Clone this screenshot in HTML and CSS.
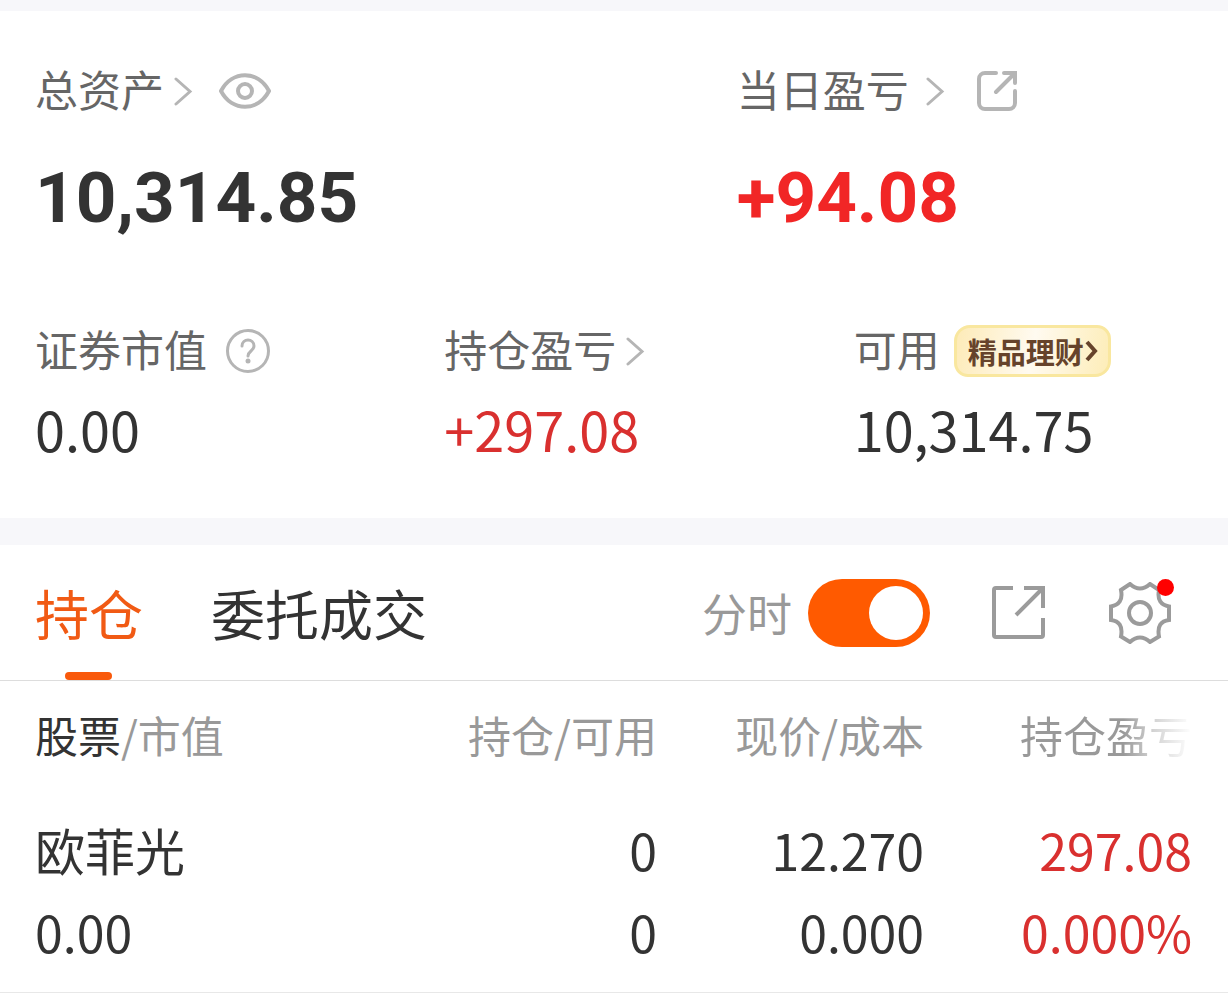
FILE: index.html
```
<!DOCTYPE html>
<html lang="zh-CN">
<head>
    <meta charset="UTF-8">
    <meta name="viewport" content="width=device-width, initial-scale=1.0">
    <title>持仓</title>
    <link rel="stylesheet" href="styles.css">
</head>
<body>
    <section class="summary">
        <div class="summary-main">
            <div class="item">
                <div class="label">
                    <a href="#assets"><span>总资产</span><svg class="arrow" width="19" height="30" viewBox="0 0 19 30"><path d="M2 3l14 12.500L2 28"/></svg></a>
                    <button class="icon-btn eye" type="button" aria-label="隐藏金额">
                        <svg width="52" height="36" viewBox="0 0 52 36"><path d="M2 18C13-3 39-3 50 18C39 39 13 39 2 18Z"/><circle cx="26" cy="18" r="7"/></svg>
                    </button>
                </div>
                <div class="total">10,314.85</div>
            </div>
            <div class="item">
                <div class="label">
                    <a href="#today"><span>当日盈亏</span><svg class="arrow wide" width="19" height="30" viewBox="0 0 19 30"><path d="M2 3l14 12.500L2 28"/></svg></a>
                    <button class="icon-btn share" type="button" aria-label="分享">
                        <svg width="40" height="40" viewBox="0 0 40 40"><path d="M19 2H8a6 6 0 0 0-6 6v24a6 6 0 0 0 6 6h24a6 6 0 0 0 6-6V20M27 2h11v10M38 2L19 21"/></svg>
                    </button>
                </div>
                <div class="total up">+94.08</div>
            </div>
        </div>
        <div class="summary-sub">
            <div class="item">
                <div class="label">
                    <span>证券市值</span>
                    <button class="icon-btn help" type="button" aria-label="说明">
                        <svg width="46" height="46" viewBox="0 0 46 46"><circle cx="23" cy="23" r="20.500"/><path d="M17 18c0-8 12-8 12 0c0 5-6 5-6 10"/><circle class="dot" cx="23" cy="33" r="2.500"/></svg>
                    </button>
                </div>
                <div class="value">0.00</div>
            </div>
            <div class="item">
                <div class="label">
                    <a href="#profit"><span>持仓盈亏</span><svg class="arrow" width="19" height="30" viewBox="0 0 19 30"><path d="M2 3l14 12.500L2 28"/></svg></a>
                </div>
                <div class="value up">+297.08</div>
            </div>
            <div class="item">
                <div class="label">
                    <span>可用</span>
                    <button class="badge" type="button">精品理财<svg width="14" height="22" viewBox="0 0 14 22"><path d="M3 2l8 9l-8 9"/></svg></button>
                </div>
                <div class="value">10,314.75</div>
            </div>
        </div>
    </section>

    <section class="positions">
        <div class="toolbar">
            <nav class="tabs">
                <a class="tab active" href="#positions">持仓</a>
                <a class="tab" href="#orders">委托成交</a>
            </nav>
            <div class="tools">
                <label for="chart">分时</label>
                <input type="checkbox" id="chart" class="switch" checked>
                <button class="icon-btn export" type="button" aria-label="导出">
                    <svg width="53" height="53" viewBox="0 0 53 53"><path d="M21 2H4a2 2 0 0 0-2 2v45a2 2 0 0 0 2 2h45a2 2 0 0 0 2-2V32M32 2h19v20M51 2L24 29"/></svg>
                </button>
                <button class="icon-btn setting" type="button" aria-label="设置">
                    <svg width="62" height="62" viewBox="0 0 62 62"><path d="M21 2Q31 11 41 2L50 8C48 18 52 23 60 24.500V38C52 39 48 44 50 54.500L41 60Q31 51 21 60L12 54.500C14 44 10 39 2 38V24.500C10 23 14 18 12 8Z"/><circle cx="31" cy="31" r="11"/></svg>
                </button>
            </div>
        </div>

        <table>
            <thead>
                <tr>
                    <th><b>股票</b>/市值</th>
                    <th>持仓/可用</th>
                    <th>现价/成本</th>
                    <th><span class="fade">持仓盈亏</span></th>
                </tr>
            </thead>
            <tbody>
                <tr>
                    <td>欧菲光</td>
                    <td>0</td>
                    <td>12.270</td>
                    <td class="up">297.08</td>
                </tr>
                <tr>
                    <td>0.00</td>
                    <td>0</td>
                    <td>0.000</td>
                    <td class="up">0.000%</td>
                </tr>
            </tbody>
        </table>
    </section>
</body>
</html>
```
FILE: styles.css
```
* {
    margin: 0;
    padding: 0;
    box-sizing: border-box;
}

body {
    font-family: "Noto Sans CJK SC", sans-serif;
    color: #333;
    background-color: #fff;
}

a {
    color: inherit;
    text-decoration: none;
}

button {
    border: none;
    background: none;
    font-family: inherit;
    cursor: pointer;
}

svg {
    display: block;
    fill: none;
    stroke: #b5b5b5;
    stroke-width: 3;
}

.up {
    color: #d9302f;
}

/* summary */
.summary {
    border-top: 11px solid #f7f7fa;
    padding: 50px 0 54px;
}

.summary-main {
    display: grid;
    grid-template-columns: 4fr 3fr;
    margin-bottom: 78px;
}

.summary-sub {
    display: grid;
    grid-template-columns: repeat(3, 1fr);
}

.item {
    padding-left: 35px;
}

.label {
    display: flex;
    align-items: center;
    height: 60px;
    font-size: 43px;
    line-height: 54px;
    color: #666;
}

.label a {
    display: flex;
    align-items: center;
}

.label span {
    padding-bottom: 6px;
}

.arrow {
    margin-left: 10px;
    stroke-linecap: round;
}

.arrow.wide {
    margin-left: 17px;
}

.eye {
    margin-left: 26px;
}

.eye svg {
    stroke-width: 4;
}

.share {
    margin-left: 32px;
}

.share svg {
    stroke-width: 4;
    stroke-linecap: round;
}

.help {
    margin-left: 18px;
}

.help svg {
    stroke-linecap: round;
}

.help .dot {
    fill: #b5b5b5;
    stroke: none;
}

.total {
    margin-top: 32px;
    font-family: Roboto, sans-serif;
    font-size: 71px;
    font-weight: bold;
    line-height: 90px;
}

.total.up {
    color: #f12626;
}

.value {
    margin-top: 13px;
    font-size: 54px;
    line-height: 70px;
}

.badge {
    display: flex;
    align-items: center;
    height: 52px;
    margin-left: 14px;
    padding: 0 10px 0 11px;
    border: 3px solid #f9e79f;
    border-radius: 16px 14px 16px 14px;
    background: linear-gradient(100deg, #fdebb8, #fffaf0 50%, #fdedb8);
    font-size: 29px;
    font-weight: bold;
    color: #66432b;
}

.badge svg {
    stroke: #66432b;
    stroke-width: 4;
}

/* positions */
.positions {
    border-top: 27px solid #f7f7fa;
}

.toolbar {
    display: flex;
    justify-content: space-between;
    height: 136px;
    padding: 0 57px 0 35px;
    border-bottom: 1px solid #ddd;
}

.tabs {
    display: flex;
    gap: 68px;
    font-size: 54px;
    line-height: 135px;
}

.tab {
    position: relative;
}

.tab.active {
    color: #f15a14;
}

.tab.active::after {
    content: "";
    position: absolute;
    left: 50%;
    bottom: 0;
    width: 47px;
    height: 8px;
    margin-left: -24px;
    border-radius: 4px;
    background-color: #f9590b;
}

.tools {
    display: flex;
    align-items: center;
    font-size: 45px;
    color: #999;
}

.tools svg {
    stroke: #9b9b9b;
    stroke-width: 4;
}

.switch {
    appearance: none;
    width: 122px;
    height: 68px;
    margin-left: 16px;
    padding: 7px;
    border-radius: 34px;
    background-color: #ccc;
    cursor: pointer;
}

.switch::before {
    content: "";
    display: block;
    width: 54px;
    height: 54px;
    border-radius: 50%;
    background-color: #fff;
}

.switch:checked {
    background-color: #ff5a00;
}

.switch:checked::before {
    margin-left: auto;
}

.export {
    margin-left: 62px;
}

.setting {
    position: relative;
    margin-left: 64px;
}

.setting::after {
    content: "";
    position: absolute;
    top: -3px;
    right: -3px;
    width: 17px;
    height: 17px;
    border-radius: 50%;
    background-color: #f00;
}

table {
    width: 100%;
    table-layout: fixed;
    border-collapse: collapse;
    border-bottom: 1px solid #e8e8e8;
}

th, td {
    text-align: right;
    white-space: nowrap;
}

th {
    height: 129px;
    padding-bottom: 24px;
    font-size: 43px;
    font-weight: normal;
    color: #999;
}

th b {
    font-weight: normal;
    color: #333;
}

th:first-child, td:first-child {
    width: 30%;
    padding-left: 35px;
    text-align: left;
}

th:nth-child(2) {
    width: 23.5%;
}

th:nth-child(3) {
    width: 21.75%;
}

th:last-child, td:last-child {
    padding-right: 36px;
}

td {
    height: 82px;
    padding-bottom: 4px;
    font-size: 50px;
    line-height: 60px;
}

tbody tr:last-child td {
    height: 100px;
    padding-bottom: 22px;
}

.fade {
    background: linear-gradient(90deg, #999 60%, #d4d4d4 78%, #fff);
    background-clip: text;
    -webkit-background-clip: text;
    color: transparent;
}
```
